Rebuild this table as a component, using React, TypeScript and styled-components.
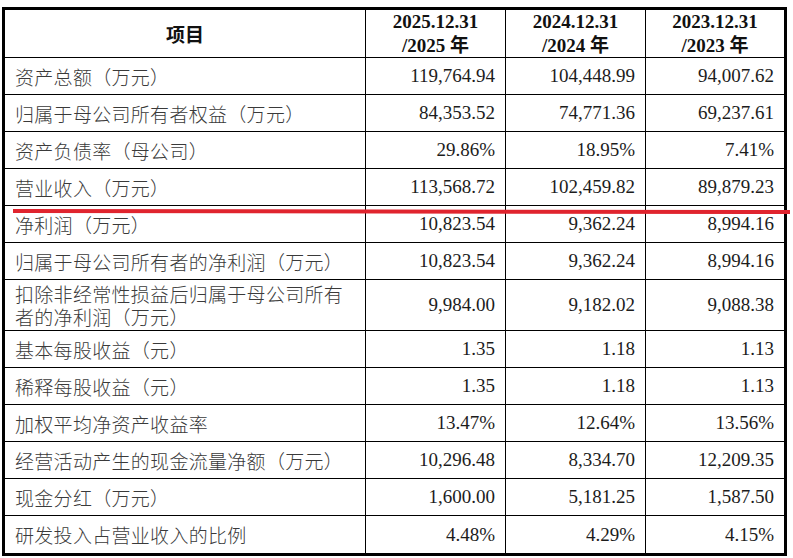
import styled, { createGlobalStyle } from 'styled-components';

type Row = {
  label: string;
  values: [string, string, string];
  tall?: boolean;
};

const rows: Row[] = [
  { label: '资产总额（万元）', values: ['119,764.94', '104,448.99', '94,007.62'] },
  { label: '归属于母公司所有者权益（万元）', values: ['84,353.52', '74,771.36', '69,237.61'] },
  { label: '资产负债率（母公司）', values: ['29.86%', '18.95%', '7.41%'] },
  { label: '营业收入（万元）', values: ['113,568.72', '102,459.82', '89,879.23'] },
  { label: '净利润（万元）', values: ['10,823.54', '9,362.24', '8,994.16'] },
  { label: '归属于母公司所有者的净利润（万元）', values: ['10,823.54', '9,362.24', '8,994.16'] },
  {
    label: '扣除非经常性损益后归属于母公司所有\n者的净利润（万元）',
    values: ['9,984.00', '9,182.02', '9,088.38'],
    tall: true,
  },
  { label: '基本每股收益（元）', values: ['1.35', '1.18', '1.13'] },
  { label: '稀释每股收益（元）', values: ['1.35', '1.18', '1.13'] },
  { label: '加权平均净资产收益率', values: ['13.47%', '12.64%', '13.56%'] },
  { label: '经营活动产生的现金流量净额（万元）', values: ['10,296.48', '8,334.70', '12,209.35'] },
  { label: '现金分红（万元）', values: ['1,600.00', '5,181.25', '1,587.50'] },
  { label: '研发投入占营业收入的比例', values: ['4.48%', '4.29%', '4.15%'] },
];

const years = ['2025', '2024', '2023'];

function App() {
  return (
    <>
      <GlobalStyle />
      <Page>
        <Table>
          <HeadCell $first>项目</HeadCell>
          {years.map((y) => (
            <HeadCell key={y}>
              <span>{y}.12.31</span>
              <span>
                /{y} <Cjk>年</Cjk>
              </span>
            </HeadCell>
          ))}

          {rows.map((row, i) => (
            <RowGroup key={i} $tall={row.tall} $last={i === rows.length - 1}>
              <LabelCell>{row.label}</LabelCell>
              {row.values.map((v, j) => (
                <ValueCell key={j}>{v}</ValueCell>
              ))}
            </RowGroup>
          ))}
        </Table>

        {/* red annotation stroke */}
        <RedMark />
      </Page>
    </>
  );
}

export default App;

const GlobalStyle = createGlobalStyle`
  html, body {
    margin: 0;
    padding: 0;
    background: #ffffff;
  }
  * {
    box-sizing: border-box;
  }
`;

const Page = styled.div`
  position: relative;
  width: 793px;
  height: 558px;
  padding: 7px 0 0 2px;
  background: #fff;
  overflow: hidden;
`;

const Table = styled.div`
  width: 785px;
  display: grid;
  grid-template-columns: 360px 140px 140px 1fr;
  border: 3px solid #000;
  color: #111;
`;

const HeadCell = styled.div<{ $first?: boolean }>`
  height: 48px;
  display: flex;
  flex-direction: column;
  align-items: center;
  justify-content: center;
  border-bottom: 1px solid #000;
  border-left: ${(p) => (p.$first ? 'none' : '1px solid #000')};
  font-family: ${(p) =>
    p.$first
      ? '"Noto Sans CJK SC", sans-serif'
      : '"Liberation Serif", "Noto Sans CJK SC", serif'};
  font-size: 19px;
  font-weight: bold;
  line-height: 22px;
  padding-top: 1px;
`;

const Cjk = styled.span`
  font-family: 'Noto Sans CJK SC', sans-serif;
  font-weight: bold;
`;

const RowGroup = styled.div<{ $tall?: boolean; $last?: boolean }>`
  grid-column: 1 / -1;
  display: grid;
  grid-template-columns: subgrid;
  height: ${(p) => (p.$tall ? '51px' : '37px')};
  border-bottom: ${(p) => (p.$last ? 'none' : '1px solid #000')};
`;

const LabelCell = styled.div`
  display: flex;
  align-items: center;
  padding: 0 6px 0 10px;
  white-space: pre-line;
  font-family: 'Noto Sans CJK SC', sans-serif;
  font-size: 19px;
  font-weight: 300;
  letter-spacing: 0.3px;
  line-height: 23px;
  color: #3a3a3a;
`;

const ValueCell = styled.div`
  display: flex;
  align-items: center;
  justify-content: flex-end;
  padding: 0 10px 0 0;
  border-left: 1px solid #000;
  font-family: 'Liberation Serif', serif;
  font-size: 19px;
  color: #1c1c1c;
`;

const RedMark = styled.div`
  position: absolute;
  left: 13px;
  top: 209px;
  width: 777px;
  height: 4px;
  background: #e0242e;
  transform: rotate(0.08deg);
  transform-origin: left center;
`;
